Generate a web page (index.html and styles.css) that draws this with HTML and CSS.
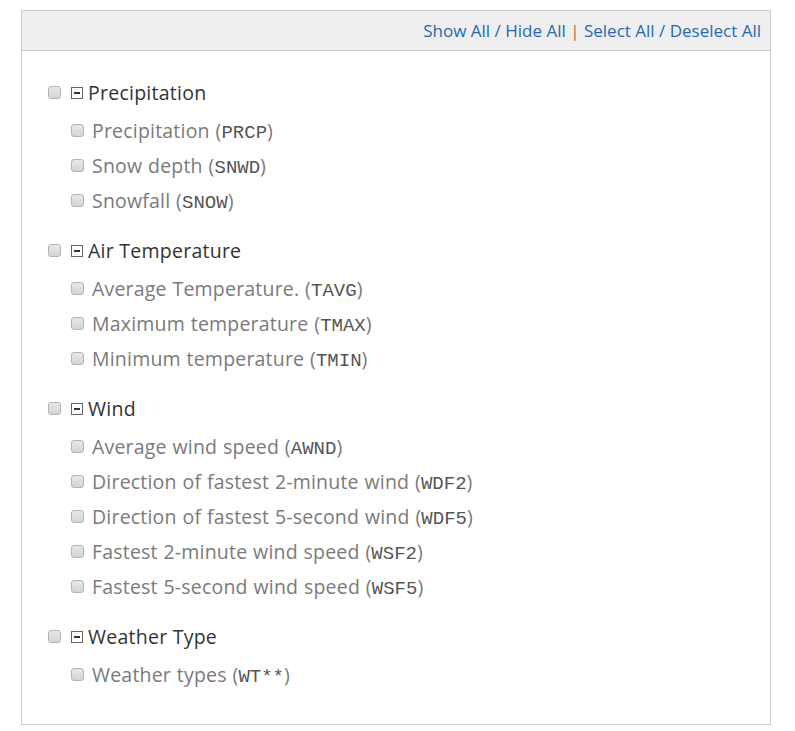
FILE: index.html
```html
<!DOCTYPE html>
<html>
<head>
<meta charset="utf-8">
<link rel="stylesheet" href="styles.css">
</head>
<body>
<div class="panel">
  <div class="toolbar">
    <a class="lnk">Show All</a> <span class="slash">/</span> <a class="lnk">Hide All</a> <span class="pipe">|</span> <a class="lnk">Select All</a> <span class="slash">/</span> <a class="lnk">Deselect All</a>
  </div>
  <div class="tree">
    <div class="group">
      <div class="head"><span class="cb"></span><span class="toggle"></span><span class="gname">Precipitation</span></div>
      <div class="item"><span class="cb"></span><span class="iname">Precipitation (<code>PRCP</code>)</span></div>
      <div class="item"><span class="cb"></span><span class="iname">Snow depth (<code>SNWD</code>)</span></div>
      <div class="item"><span class="cb"></span><span class="iname">Snowfall (<code>SNOW</code>)</span></div>
    </div>
    <div class="group">
      <div class="head"><span class="cb"></span><span class="toggle"></span><span class="gname">Air Temperature</span></div>
      <div class="item"><span class="cb"></span><span class="iname">Average Temperature. (<code>TAVG</code>)</span></div>
      <div class="item"><span class="cb"></span><span class="iname">Maximum temperature (<code>TMAX</code>)</span></div>
      <div class="item"><span class="cb"></span><span class="iname">Minimum temperature (<code>TMIN</code>)</span></div>
    </div>
    <div class="group">
      <div class="head"><span class="cb"></span><span class="toggle"></span><span class="gname">Wind</span></div>
      <div class="item"><span class="cb"></span><span class="iname">Average wind speed (<code>AWND</code>)</span></div>
      <div class="item"><span class="cb"></span><span class="iname">Direction of fastest 2-minute wind (<code>WDF2</code>)</span></div>
      <div class="item"><span class="cb"></span><span class="iname">Direction of fastest 5-second wind (<code>WDF5</code>)</span></div>
      <div class="item"><span class="cb"></span><span class="iname">Fastest 2-minute wind speed (<code>WSF2</code>)</span></div>
      <div class="item"><span class="cb"></span><span class="iname">Fastest 5-second wind speed (<code>WSF5</code>)</span></div>
    </div>
    <div class="group">
      <div class="head"><span class="cb"></span><span class="toggle"></span><span class="gname">Weather Type</span></div>
      <div class="item"><span class="cb"></span><span class="iname">Weather types (<code>WT**</code>)</span></div>
    </div>
  </div>
</div>
</body>
</html>
```
FILE: styles.css
```css
html, body {
  margin: 0;
  padding: 0;
  background: #fff;
}
body {
  font-family: "Open Sans", "Liberation Sans", sans-serif;
  padding: 10px 0 0 21px;
}
.panel {
  box-sizing: border-box;
  width: 750px;
  height: 715px;
  border: 1px solid #ccc;
}
.toolbar {
  height: 39px;
  background: #eee;
  border-bottom: 1px solid #ccc;
  text-align: right;
  padding-right: 9px;
  font-size: 17px;
  line-height: 40px;
  color: #2968b0;
}
.lnk {
  color: #2968b0;
  cursor: pointer;
}
.slash {
  color: #2968b0;
}
.pipe {
  color: #b5743f;
}
.tree {
  padding: 24px 0 0 26px;
  display: flex;
  flex-direction: column;
  gap: 15px;
}
.group {
  display: flex;
  flex-direction: column;
}
.head {
  display: flex;
  align-items: center;
  height: 35px;
  margin-bottom: 3px;
}
.item {
  display: flex;
  align-items: center;
  height: 35px;
  padding-left: 23px;
}
.cb {
  box-sizing: border-box;
  width: 13px;
  height: 13px;
  border: 1px solid #b4b4b4;
  border-radius: 3px;
  background: linear-gradient(#e8e8e8, #d4d4d4);
  flex: none;
}
.toggle {
  box-sizing: border-box;
  width: 12px;
  height: 12px;
  border: 1px solid #666;
  margin-left: 10px;
  position: relative;
  flex: none;
}
.toggle::after {
  content: "";
  position: absolute;
  left: 2px;
  top: 4px;
  width: 6px;
  height: 2px;
  background: #333;
}
.gname {
  margin-left: 5px;
  font-size: 19.5px;
  letter-spacing: 0.25px;
  color: #333;
}
.iname {
  margin-left: 8px;
  font-size: 19.5px;
  letter-spacing: 0.2px;
  word-spacing: 0.5px;
  color: #7a7a7a;
}
code {
  font-family: "Liberation Mono", "Courier New", monospace;
  font-size: 19px;
  letter-spacing: 0;
  color: #555;
}
```
